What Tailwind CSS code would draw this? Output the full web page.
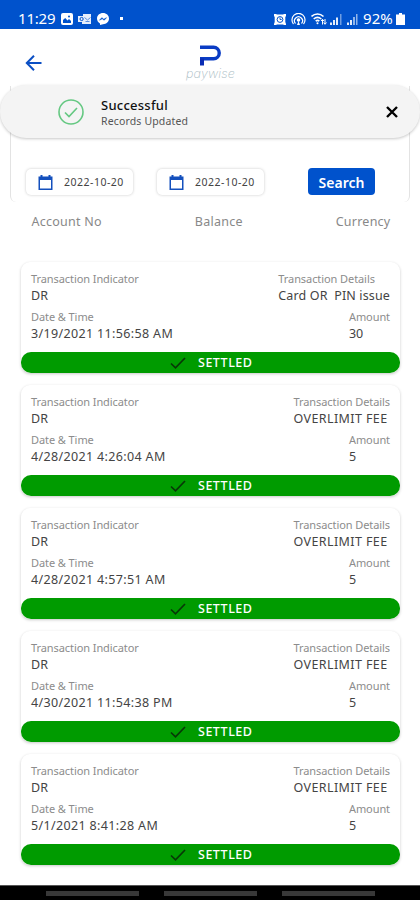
<!DOCTYPE html>
<html lang="en">

<head>
    <meta charset="UTF-8">
    <meta name="viewport" content="width=device-width, initial-scale=1.0">
    <title>Paywise Statement</title>
    <script src="https://cdn.jsdelivr.net/npm/@tailwindcss/browser@4"></script>
</head>

<body class="bg-white font-['Noto_Sans',sans-serif] text-[#444]">
    <div class="relative w-[420px] h-[900px] flex flex-col overflow-hidden">
        <!-- status bar -->
        <div class="h-[29px] shrink-0 bg-[#0052cc] text-white flex items-center pl-[18px] pr-[15px] pt-[8px]">
            <span class="w-[37px] text-[15px] leading-[21px] whitespace-nowrap tracking-[-0.2px]">11:29</span>
            <svg class="w-3 h-3 ml-[6px]" viewBox="0 0 12 12"><rect width="12" height="12" rx="2" fill="#fff"/><path d="M2 10V7l2.200-2 2.300 2.500L8 6l2 2v2z" fill="#0052cc"/><circle cx="8" cy="3.500" r="1" fill="#0052cc"/></svg>
            <svg class="w-[14px] h-3 ml-[5px]" viewBox="0 0 14 12"><path d="M5 1h8v10H4V9H0V3h5z" fill="#e6eefb"/><circle cx="3.600" cy="6" r="1.600" fill="none" stroke="#0052cc"/><path d="M6.500 4.500 9.500 7l3-2.500M7.500 8.500h4" fill="none" stroke="#5b8fe0"/></svg>
            <svg class="w-3 h-3 ml-[5px]" viewBox="0 0 12 12"><path d="M6 0c3.400 0 6 2.300 6 5.600S9.400 11.300 6 11.300L3 12v-1.500C1.200 9.600 0 7.800 0 5.600 0 2.300 2.600 0 6 0z" fill="#fff"/><path d="m2.500 7.200 2.300-2.500 2 1.600 2.700-1.600-2.300 2.500-2-1.500z" fill="#0052cc" stroke="#0052cc" stroke-width=".6"/></svg>
            <span class="w-[3px] h-[3px] ml-[11px] bg-white"></span>
            <svg class="w-3 h-3 ml-auto" viewBox="0 0 12 12"><path d="M0 1h2l1 .5h6l1-.5h2v2l-.7 1v5l.7 2v1h-2l-1-.5H3L2 12H0v-1l.7-2V4L0 3z" fill="#fff"/><circle cx="6" cy="6.500" r="2.900" fill="none" stroke="#0052cc"/><path d="M6 4.500v2h1.700" fill="none" stroke="#0052cc" stroke-width=".9"/></svg>
            <svg class="w-[15px] h-3 ml-[5px]" viewBox="0 0 15 12" fill="none" stroke="#fff" stroke-width="1.200"><path d="M2.500 11A6.500 6.500 0 1 1 12.500 11M4.500 10.500a4 4 0 1 1 6 0"/><circle cx="7.500" cy="7" r="1.200" fill="#fff"/><path d="M6 12l1.500-4L9 12z" fill="#fff" stroke="none"/></svg>
            <svg class="w-4 h-3 ml-[5px]" viewBox="0 0 16 12" fill="none" stroke="#fff" stroke-width="1.600"><path d="M.5 3.500C4 .2 9 .2 12.500 3.500M2.700 6c2.300-2 5.300-2 7.600 0M4.700 8.200c1.200-1 2.500-1 3.600 0"/><circle cx="6.500" cy="10.300" r="1" fill="#fff" stroke="none"/><path d="M11.500 11.500V6.500M14 6v5M10 8l1.500-1.700L13 8M12.700 9.500 14 11.300l1.500-1.800" stroke-width="1"/></svg>
            <svg class="w-3 h-3 ml-[3px]" viewBox="0 0 12 12"><path d="M0 9.500h2V12H0zM3 7h2v5H3zM6 4.500h2V12H6z" fill="#e3ecfa"/><path d="M10 1h1.500v11H10z" fill="#6f9de2"/></svg>
            <svg class="w-3 h-3 ml-[4px]" viewBox="0 0 12 12"><path d="M1 9.500h2V12H1zM4 7h2v5H4z" fill="#e3ecfa"/><path d="M7 4h2v8H7zM10 1h1.500v11H10z" fill="#8fb4ea"/></svg>
            <span class="w-[33px] ml-[5px] text-[15px] leading-[21px] whitespace-nowrap tracking-[0.1px]">92%</span>
            <svg class="w-[9px] h-3" viewBox="0 0 9 12"><path d="M3 0h3v1.500h3V12H0V1.500h3z" fill="#fff"/></svg>
        </div>

        <!-- app header -->
        <div class="h-[57px] shrink-0 flex items-start justify-between pl-[25px] pr-[25px]">
            <svg class="w-[17px] h-4 mt-[26px]" viewBox="0 0 17 16" fill="none" stroke="#0b4fc4" stroke-width="2"><path d="M16.500 8H2M9 .8 1.800 8 9 15.200"/></svg>
            <div class="w-[50px] flex flex-col items-center mt-[16px] ml-[1px]">
                <svg class="w-[21px] h-[21px]" viewBox="0 0 21 21" fill="none" stroke-width="3.400" stroke="#0a3cc4"><path d="M0 2.200h13.500a5.750 5.750 0 0 1 0 11.500H0"/><path d="M2 13.500v7" stroke="#0a2cb4" stroke-width="4"/></svg>
                <span class="pt-px text-[12.500px] leading-[14px] text-[#a9bbc3] font-extralight italic font-['Inter',sans-serif] whitespace-nowrap tracking-[0.200px]">paywise</span>
            </div>
            <span class="w-[17px]"></span>
        </div>

        <!-- filter card -->
        <div class="h-[116px] shrink-0 mx-[10px] rounded-b-md border-x border-[#e3e3e3] flex items-end pb-[7px] pl-[15px]">
            <div class="w-[107px] h-[26px] rounded-[5px] bg-white shadow-[0_0_3px_rgba(0,0,0,0.22)] flex items-center pl-[12px]">
                <svg class="w-[15px] h-[15px]" viewBox="0 0 15 15"><path d="M2.500 0h2v1.500h6V0h2v1.500h2V15H.5V1.500h2zM2 5v8.500h11V5z" fill="#1450bd" fill-rule="evenodd"/></svg>
                <span class="ml-[11px] pt-px text-[10.500px] whitespace-nowrap tracking-[0.500px]">2022-10-20</span>
            </div>
            <div class="w-[107px] h-[26px] ml-[24px] rounded-[5px] bg-white shadow-[0_0_3px_rgba(0,0,0,0.22)] flex items-center pl-[12px]">
                <svg class="w-[15px] h-[15px]" viewBox="0 0 15 15"><path d="M2.500 0h2v1.500h6V0h2v1.500h2V15H.5V1.500h2zM2 5v8.500h11V5z" fill="#1450bd" fill-rule="evenodd"/></svg>
                <span class="ml-[11px] pt-px text-[10.500px] whitespace-nowrap tracking-[0.500px]">2022-10-20</span>
            </div>
            <button class="w-[67px] h-[27px] ml-[44px] rounded-[4px] bg-[#0052cc] text-white text-[14px] font-semibold pt-px">Search</button>
        </div>

        <div class="h-[60px] shrink-0 flex justify-between pt-[11px] pl-[31.500px] pr-[29.500px] text-[12.500px] leading-[18px] tracking-[0.250px] text-[#888]">
            <span>Account No</span>
            <span>Balance</span>
            <span>Currency</span>
        </div>

        <!-- transactions -->
        <div id="list" class="flex flex-col gap-[12px] pl-[21px] pr-[20px]"></div>

        <!-- navigation bar -->
        <div class="h-[15px] mt-auto shrink-0 bg-black border-t border-[#555] flex justify-center gap-[25px] pt-[5px]">
            <span class="w-[93px] h-[5px] bg-[#383838]"></span>
            <span class="w-[93px] h-[5px] bg-[#383838]"></span>
            <span class="w-[93px] h-[5px] bg-[#383838]"></span>
        </div>

        <!-- toast -->
        <div class="absolute left-0 top-[85px] w-[420px] h-[53px] rounded-full bg-[#f4f4f4] shadow-[0_1px_3px_rgba(0,0,0,0.22)] flex items-center pl-[58px] pr-[22px]">
            <svg class="w-[26px] h-[26px]" viewBox="0 0 26 26" fill="none" stroke="#65c882" stroke-width="1.600"><circle cx="13" cy="13" r="12"/><path d="m7 13.500 4 4 8-8.500"/></svg>
            <div class="ml-[17px] pt-px flex flex-col whitespace-nowrap">
                <span class="text-[13px] leading-[18px] font-medium tracking-[0.250px] text-[#111]">Successful</span>
                <span class="text-[10.500px] leading-[15px] tracking-[0.150px] text-[#555]">Records Updated</span>
            </div>
            <svg class="w-3 h-3 ml-auto" viewBox="0 0 12 12" stroke="#000" stroke-width="2.400"><path d="m1 1 10 10M11 1 1 11"/></svg>
        </div>
    </div>

    <script>
        const transactions = [
            { date: '3/19/2021 11:56:58 AM', details: 'Card OR  PIN issue', amount: '30' },
            { date: '4/28/2021 4:26:04 AM', details: 'OVERLIMIT FEE', amount: '5' },
            { date: '4/28/2021 4:57:51 AM', details: 'OVERLIMIT FEE', amount: '5' },
            { date: '4/30/2021 11:54:38 PM', details: 'OVERLIMIT FEE', amount: '5' },
            { date: '5/1/2021 8:41:28 AM', details: 'OVERLIMIT FEE', amount: '5' }
        ]

        const label = (text) => `<div class="text-[11px] leading-[16px] tracking-[-0.080px] text-[#8c8c8c]">${text}</div>`

        const card = (t) => `
            <div class="h-[111px] rounded-[9px] bg-white shadow-[0_1px_3px_rgba(0,0,0,0.22)] flex flex-col justify-between">
                <div class="px-[10px] pt-[9px] text-[12.500px] leading-[17px] whitespace-pre flex flex-col gap-[5px]">
                    <div class="flex justify-between">
                        <div>${label('Transaction Indicator')}<div>DR</div></div>
                        <div>${label('Transaction Details')}<div class="${t.details === 'OVERLIMIT FEE' ? 'tracking-[0.400px]' : 'tracking-[0.130px]'}">${t.details}</div></div>
                    </div>
                    <div class="flex justify-between">
                        <div>${label('Date &amp; Time')}<div class="tracking-[0.350px]">${t.date}</div></div>
                        <div>${label('Amount')}<div>${t.amount}</div></div>
                    </div>
                </div>
                <div class="h-[21px] rounded-[10px] bg-[#009b00] text-white flex items-center pl-[149px]">
                    <svg class="w-4 h-3" viewBox="0 0 16 12" fill="none" stroke="#073807" stroke-width="1.700"><path d="m1 6.500 4.500 4.300L15 1"/></svg>
                    <span class="ml-[12px] pt-[2px] text-[12.500px] font-medium tracking-[0.500px]">SETTLED</span>
                </div>
            </div>`

        document.getElementById('list').innerHTML = transactions.map(card).join('')
    </script>
</body>

</html>
